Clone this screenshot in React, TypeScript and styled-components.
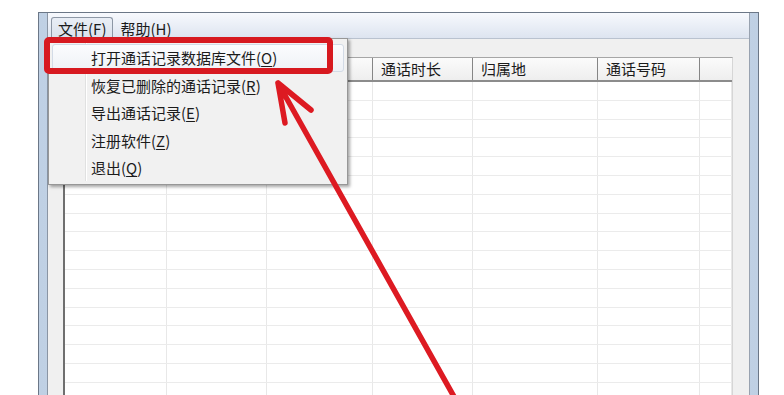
import styled, { createGlobalStyle, css } from "styled-components";

const GlobalStyle = createGlobalStyle`
    html, body {
        margin: 0;
        padding: 0;
        background: #ffffff;
        height: 395px;
        overflow: hidden;
    }

    body {
        font-family: "Noto Sans CJK SC", "Noto Sans", sans-serif;
        color: #1b1b1b;
    }

    u {
        text-decoration-thickness: 1px;
        text-underline-offset: 2px;
    }
`

const COLUMNS = "102px 100px 106px 100px 125px 102px 1fr";

const Page = styled.div`
    position: relative;
    width: 784px;
    height: 395px;
    padding: 12px 0 0 38px;
    box-sizing: border-box;
`

const Window = styled.div`
    width: 721px;
    height: 400px;
    box-sizing: border-box;
    border: 1px solid #6b7787;
    border-bottom: none;
    background: linear-gradient(90deg, #bfd0e4, #d3e0ef 50%, #bfd0e4);
    padding: 0 8px;
    display: flex;
`

const Inner = styled.div`
    flex: 1;
    display: flex;
    flex-direction: column;
    border-left: 1px solid #8a95a4;
    border-right: 1px solid #98a2b0;
    background: #f0f0f0;
`

const MenuBar = styled.div`
    height: 25px;
    display: flex;
    align-items: flex-end;
    padding-left: 3px;
    border-bottom: 1px solid #b9c2cf;
    background: linear-gradient(#f7f9fd, #dde4f0);
`

const MenuBarItem = styled.div<{ $open?: boolean }>`
    height: 21px;
    box-sizing: border-box;
    display: flex;
    align-items: center;
    padding: 0 6px;
    font-size: 15px;
    border: 1px solid transparent;
    border-bottom: none;
    border-radius: 3px 3px 0 0;

    ${p => p.$open && css`
        border-color: #8d97a5;
        background: linear-gradient(#e9eef6, #dbe2ec);
    `}
`

const Client = styled.div`
    flex: 1;
    display: flex;
    padding: 18px 16px 0 15px;
    min-height: 0;
`

const Table = styled.div`
    flex: 1;
    display: flex;
    flex-direction: column;
    background: #ffffff;
    border-left: 2px solid #6f6f6f;
    border-top: 1px solid #a6a6a6;
    border-right: 1px solid #d6d6d6;
    overflow: hidden;
`

const HeaderRow = styled.div`
    display: grid;
    grid-template-columns: ${COLUMNS};
    height: 24px;
    box-sizing: border-box;
    border-bottom: 2px solid #8c8c8c;
    background: linear-gradient(#fbfbfb, #eeeeee);
`

const HeaderCell = styled.div<{ $last?: boolean }>`
    padding-left: 8px;
    font-size: 15px;
    line-height: 22px;
    white-space: nowrap;
    overflow: hidden;
    border-right: ${p => p.$last ? "none" : "1px solid #858585"};
`

const BodyRow = styled.div`
    display: grid;
    grid-template-columns: ${COLUMNS};
    height: 18.8px;
    flex-shrink: 0;
    box-sizing: border-box;
    border-bottom: 1px solid #ebebeb;
`

const BodyCell = styled.div`
    border-right: 1px solid #e8e8e8;
`

const DropMenu = styled.div`
    position: absolute;
    left: 48px;
    top: 38px;
    width: 300px;
    box-sizing: border-box;
    padding: 5px 3px 2px 3px;
    background: #f1f1f1;
    border: 1px solid #979797;
    box-shadow: 2px 2px 3px rgba(0, 0, 0, 0.35);
    display: flex;
    flex-direction: column;

    &::before {
        content: "";
        position: absolute;
        left: 36px;
        top: 3px;
        bottom: 3px;
        width: 1px;
        background: #e0e1e1;
        box-shadow: 1px 0 #ffffff;
    }
`

const MenuItem = styled.div<{ $active?: boolean }>`
    position: relative;
    height: 27.5px;
    box-sizing: border-box;
    display: flex;
    align-items: center;
    padding-left: 38px;
    font-size: 15px;
    border: 1px solid transparent;
    border-radius: 3px;

    ${p => p.$active && css`
        border-color: #d3dbe6;
        background: linear-gradient(#fbfcfe, #eef1f6);
    `}
`

const Highlight = styled.div`
    position: absolute;
    left: 44px;
    top: 37px;
    width: 289px;
    height: 37px;
    box-sizing: border-box;
    border: 6px solid #d71920;
    border-radius: 5px;
`

const ArrowLayer = styled.svg`
    position: absolute;
    left: 0;
    top: 0;
    pointer-events: none;
`

const Mnemonic = ({ label, k }: { label: string, k: string }) => (
    <span>{label}(<u>{k}</u>)</span>
)

const menuItems = [
    { label: "打开通话记录数据库文件", k: "O" },
    { label: "恢复已删除的通话记录", k: "R" },
    { label: "导出通话记录", k: "E" },
    { label: "注册软件", k: "Z" },
    { label: "退出", k: "Q" },
]

const headers = ["", "", "", "通话时长", "归属地", "通话号码", ""];

const App = () => {
    const rows = Array.from({ length: 18 }, (_, i) => i);

    return (
        <Page>
            <GlobalStyle />
            <Window>
                <Inner>
                    <MenuBar>
                        <MenuBarItem $open><Mnemonic label="文件" k="F" /></MenuBarItem>
                        <MenuBarItem><Mnemonic label="帮助" k="H" /></MenuBarItem>
                    </MenuBar>
                    <Client>
                        <Table>
                            <HeaderRow>
                                {headers.map((h, i) => (
                                    <HeaderCell key={i} $last={i === headers.length - 1}>{h}</HeaderCell>
                                ))}
                            </HeaderRow>
                            {rows.map(r => (
                                <BodyRow key={r}>
                                    {headers.map((_, i) => <BodyCell key={i} />)}
                                </BodyRow>
                            ))}
                        </Table>
                    </Client>
                </Inner>
            </Window>

            <DropMenu>
                {menuItems.map((m, i) => (
                    <MenuItem key={m.k} $active={i === 0}>
                        <Mnemonic label={m.label} k={m.k} />
                    </MenuItem>
                ))}
            </DropMenu>

            <Highlight />

            <ArrowLayer width="784" height="395" viewBox="0 0 784 395">
                <path
                    d="M457 402 L278 83 M285 123 L278 83 L311 110"
                    fill="none"
                    stroke="#dd1a22"
                    strokeWidth="5.5"
                    strokeLinecap="round"
                    strokeLinejoin="round"
                />
            </ArrowLayer>
        </Page>
    )
}

export default App;
